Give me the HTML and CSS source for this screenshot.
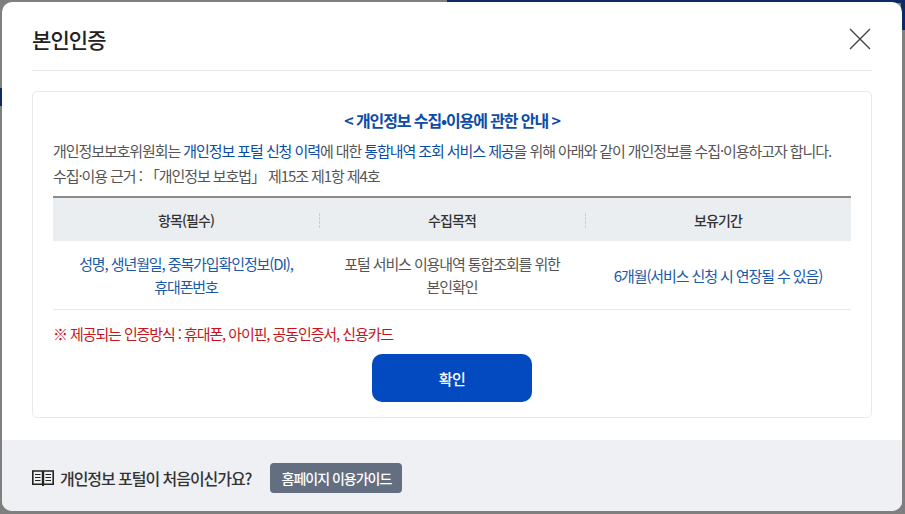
FILE: index.html
```html
<!DOCTYPE html>
<html lang="ko">
<head>
<meta charset="utf-8">
<title>본인인증</title>
<link rel="stylesheet" href="styles.css">
</head>
<body>
<div class="backdrop-top"></div>
<div class="backdrop-left"></div>
<div class="backdrop-right"></div>
<main class="modal">
  <header class="modal-head">
    <h1 class="modal-title">본인인증</h1>
    <button class="close" aria-label="닫기">
      <svg width="22" height="22" viewBox="0 0 22 22"><path d="M1 1L21 21M21 1L1 21" stroke="#444" stroke-width="1.4" fill="none"/></svg>
    </button>
  </header>
  <section class="panel">
    <h2 class="panel-title">&lt; 개인정보 수집•이용에 관한 안내 &gt;</h2>
    <p class="intro">개인정보보호위원회는 <em>개인정보 포털 신청 이력</em>에 대한 <em>통합내역 조회 서비스 제공</em>을 위해 아래와 같이 개인정보를 수집·이용하고자 합니다.</p>
    <p class="intro">수집·이용 근거 : 「개인정보 보호법」 제15조 제1항 제4호</p>
    <div class="table">
      <div class="th">항목(필수)</div>
      <div class="th th-sep">수집목적</div>
      <div class="th th-sep">보유기간</div>
      <div class="td blue">성명, 생년월일, 중복가입확인정보(DI),<br>휴대폰번호</div>
      <div class="td">포털 서비스 이용내역 통합조회를 위한<br>본인확인</div>
      <div class="td blue">6개월(서비스 신청 시 연장될 수 있음)</div>
    </div>
    <p class="notice">※ 제공되는 인증방식 : 휴대폰, 아이핀, 공동인증서, 신용카드</p>
    <div class="actions"><button class="confirm">확인</button></div>
  </section>
  <footer class="modal-foot">
    <svg class="book" width="22" height="16" viewBox="0 0 22 16"><path d="M.8 1H10.600V14.200H.8ZM11.400 1H21.200V14.200H11.400Z" stroke="#222" stroke-width="1.600" fill="none"/><path d="M10 15.500H12M3 4.500H8.500M3 7.500H8.500M3 10.500H8.500M13.500 4.500H19M13.500 7.500H19M13.500 10.500H19" stroke="#222" stroke-width="1" fill="none"/></svg>
    <span class="foot-text">개인정보 포털이 처음이신가요?</span>
    <a class="guide">홈페이지 이용가이드</a>
  </footer>
</main>
</body>
</html>
```

FILE: styles.css
```css
* { box-sizing: border-box; }
html, body { margin: 0; height: 100%; }
body {
  background: #7f7f7f;
  padding: 2px 3px 3px 2px;
  font-family: "Noto Sans CJK KR", "Noto Sans", sans-serif;
  overflow: hidden;
}
.backdrop-top {
  position: absolute; left: 447px; top: 0; right: 0; height: 3px;
  background: #0b2a66;
}
.backdrop-left {
  position: absolute; left: 0; top: 88px; width: 2px; height: 18px;
  background: #0b2a66;
}
.backdrop-right {
  position: absolute; right: 0; top: 0; width: 4px; height: 30px;
  background: #0b2a66;
}
.modal {
  position: relative;
  height: 509px;
  background: #fff;
  border-radius: 10px;
  overflow: hidden;
  display: flex;
  flex-direction: column;
}
.modal-head {
  margin: 0 30px;
  height: 69px;
  border-bottom: 1px solid #e5e5e5;
  display: flex;
  align-items: center;
  justify-content: space-between;
  padding-top: 5px;
}
.modal-title {
  margin: 0;
  font-size: 21px;
  font-weight: 500;
  letter-spacing: -0.9px;
  color: #222;
}
.close {
  border: 0; background: none; padding: 0; margin-right: 1px;
  display: flex;
}
.panel {
  margin: 20px 30px 0;
  height: 327px;
  border: 1px solid #e8e8e8;
  border-radius: 5px;
  padding: 16px 20px 0;
}
.panel-title {
  margin: 0 0 6px;
  text-align: center;
  font-size: 16px;
  line-height: 24px;
  font-weight: 700;
  letter-spacing: -1.1px;
  color: #0b4da8;
}
.intro {
  margin: 0;
  font-size: 15px;
  line-height: 25px;
  letter-spacing: -1.08px;
  color: #555;
  white-space: nowrap;
}
.intro em { font-style: normal; color: #0b4da2; }
.table {
  margin-top: 8px;
  display: grid;
  grid-template-columns: 266px 266px 266px;
  border-top: 2px solid #8a8a8a;
}
.th {
  height: 43px;
  background: #ebeef1;
  display: flex;
  align-items: center;
  justify-content: center;
  font-size: 14px;
  font-weight: 500;
  letter-spacing: -0.9px;
  color: #333;
  position: relative;
}
.th-sep::before {
  content: "";
  position: absolute;
  left: 0; top: 15px; height: 15px;
  border-left: 1px dashed #c5d0da;
}
.td {
  height: 69px;
  border-bottom: 1px solid #e8e8e8;
  display: flex;
  align-items: center;
  justify-content: center;
  text-align: center;
  font-size: 15px;
  line-height: 23px;
  letter-spacing: -1.1px;
  color: #555;
}
.blue { color: #1a5aa8; }
.notice {
  margin: 13px 0 0;
  font-size: 15px;
  line-height: 22px;
  letter-spacing: -1.1px;
  color: #c4161c;
}
.actions { display: flex; justify-content: center; margin-top: 9px; }
.confirm {
  width: 160px; height: 48px;
  border: 0; border-radius: 10px;
  background: #0349bf;
  color: #fff;
  font: 500 15px "Noto Sans CJK KR", sans-serif;
  letter-spacing: -0.5px;
}
.modal-foot {
  margin-top: 22px;
  flex: 1;
  background: #eef0f3;
  display: flex;
  align-items: center;
  padding: 4px 30px 0;
}
.book { margin-right: 6px; flex: none; }
.foot-text {
  font-size: 16px;
  font-weight: 500;
  letter-spacing: -1.05px;
  color: #333;
}
.guide {
  margin-left: 19px;
  width: 132px; height: 30px;
  border-radius: 4px;
  background: #646e81;
  color: #fff;
  font-size: 14px;
  font-weight: 500;
  letter-spacing: -1px;
  display: flex;
  align-items: center;
  justify-content: center;
}
```
